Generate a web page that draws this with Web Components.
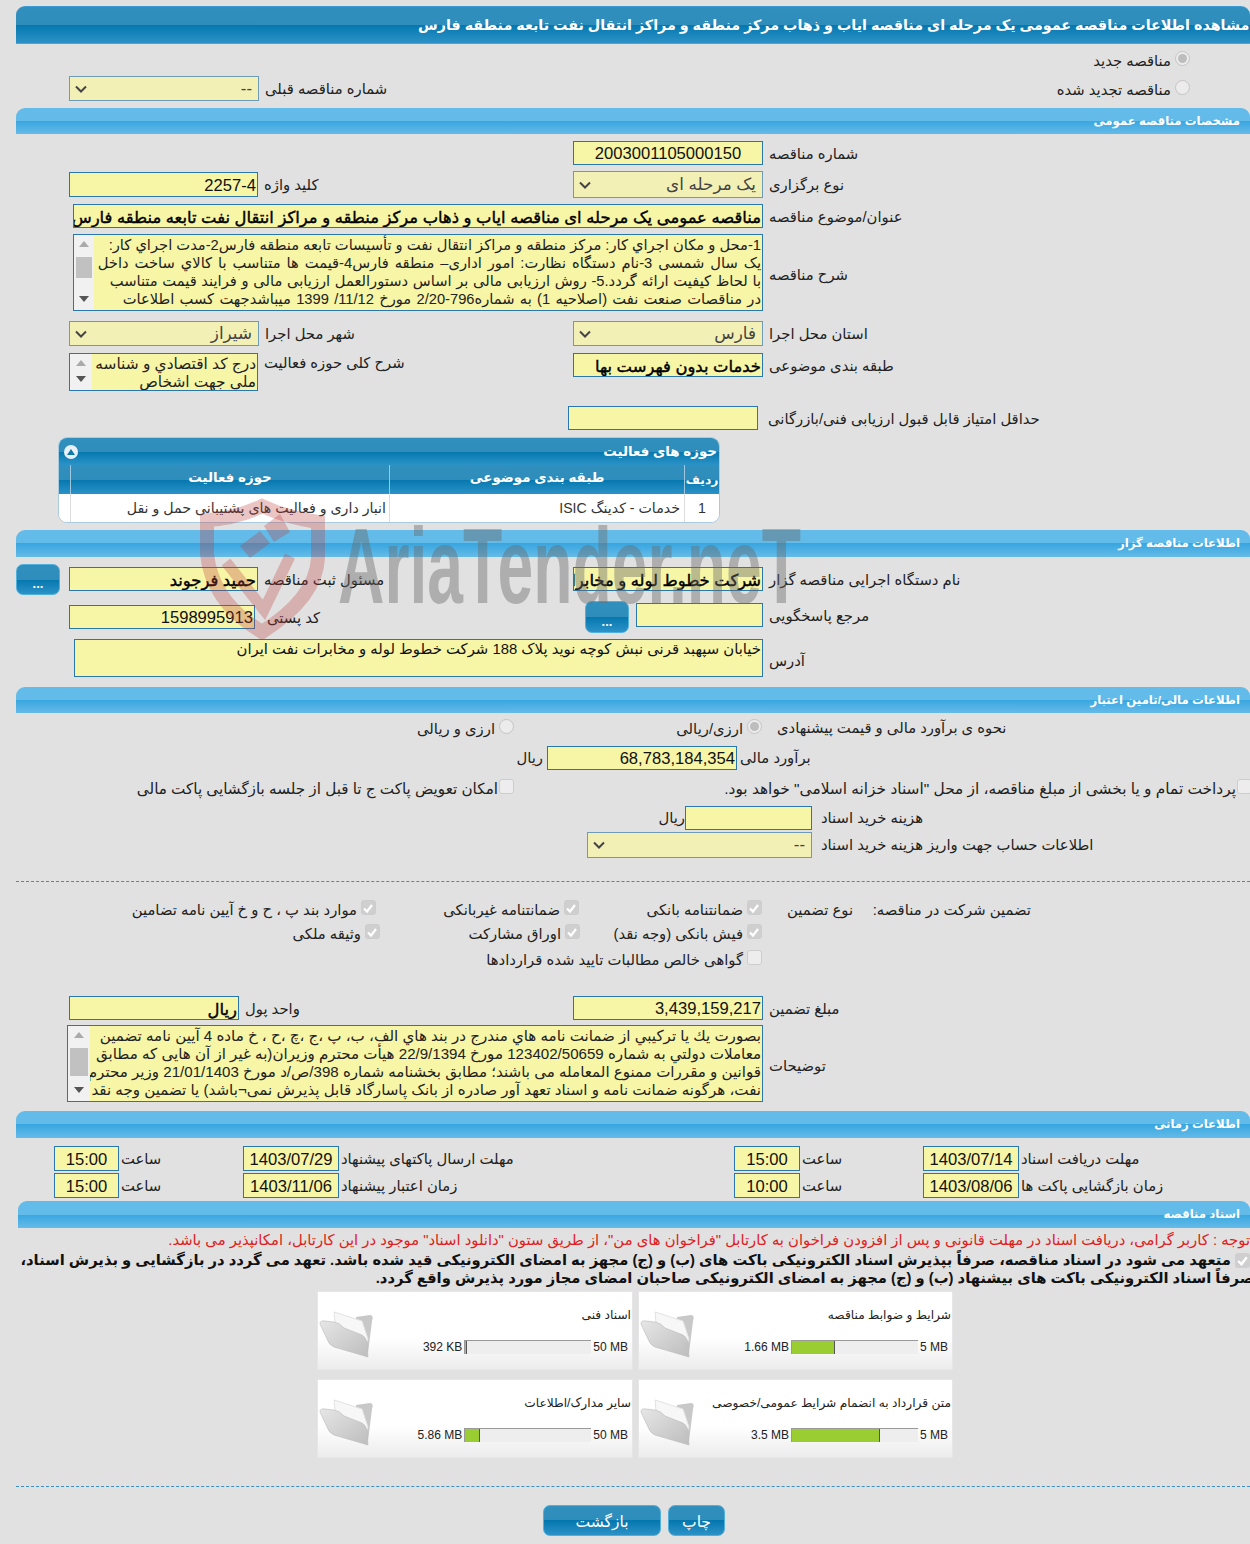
<!DOCTYPE html>
<html lang="fa">
<head>
<meta charset="UTF-8">
<title>مشاهده اطلاعات مناقصه</title>
<style>
html, body { margin: 0; padding: 0; background: #e1e1e1; }
body { font-family: "Liberation Sans", "DejaVu Sans", sans-serif; font-size: 14px; color: #222; }
</style>
</head>
<body>
<tender-page>
  <section-bar kind="title" lead="402">مشاهده اطلاعات مناقصه عمومی یک مرحله ای مناقصه ایاب و ذهاب مرکز منطقه و مراکز انتقال نفت تابعه منطقه فارس</section-bar>

  <form-row cols="504px 1fr" pad="53" style="margin-top:8px;height:50px">
    <select-field label="شماره مناقصه قبلی" style="margin-top:24px;height:25px">--</select-field>
    <div style="display:flex;flex-direction:column;align-items:flex-end;gap:12px;padding-right:60px">
      <tick-item type="radio" checked>مناقصه جدید</tick-item>
      <tick-item type="radio">مناقصه تجدید شده</tick-item>
    </div>
  </form-row>

  <section-bar style="margin-top:6px">مشخصات مناقصه عمومی</section-bar>

  <form-row cols="504px 1fr" pad="53" style="margin-top:7px">
    <span></span>
    <text-field label="شماره مناقصه" align="center">2003001105000150</text-field>
  </form-row>
  <form-row cols="504px 1fr" pad="53" style="margin-top:6px">
    <text-field label="کلید واژه" w="189" h="25" style="margin-top:1px">2257-4</text-field>
    <select-field label="نوع برگزاری" h="27">یک مرحله ای</select-field>
  </form-row>
  <form-row cols="1fr" pad="57" style="margin-top:6px">
    <text-field label="عنوان/موضوع مناقصه" w="690" bold>مناقصه عمومی یک مرحله ای مناقصه ایاب و ذهاب مرکز منطقه و مراکز انتقال نفت تابعه منطقه فارس</text-field>
  </form-row>
  <form-row cols="1fr" pad="57" style="margin-top:6px">
    <memo-field label="شرح مناقصه" w="690" h="77" thumb="22,21" size="14.7">
      <div>1-محل و مکان اجراي کار: مرکز منطقه و مراکز انتقال نفت و تأسیسات تابعه منطقه فارس2-مدت اجراي کار:</div>
      <div style="word-spacing:1.9px">یک سال شمسی 3-نام دستگاه نظارت: امور اداری– منطقه فارس4-قیمت ها متناسب با کالاي ساخت داخل</div>
      <div style="word-spacing:.6px">با لحاظ کیفیت ارائه گردد.5- روش ارزیابی مالی بر اساس دستورالعمل ارزیابی مالی و فرایند قیمت متناسب</div>
      <div style="word-spacing:1.2px">در مناقصات صنعت نفت (اصلاحیه 1) به شماره796-2/20 مورخ 11/12/ 1399 میباشدجهت کسب اطلاعات</div>
    </memo-field>
  </form-row>
  <form-row cols="504px 1fr" pad="53" style="margin-top:10px">
    <select-field label="شهر محل اجرا" h="25">شیراز</select-field>
    <select-field label="استان محل اجرا" h="25">فارس</select-field>
  </form-row>
  <form-row cols="504px 1fr" pad="53" style="margin-top:7px">
    <memo-field label="شرح کلی حوزه فعالیت" w="189" h="38" barw="22" labeltop="1" size="15.4">
      <div>درج کد اقتصادي و شناسه</div>
      <div>ملي جهت اشخاص</div>
    </memo-field>
    <text-field label="طبقه بندی موضوعی" bold style="align-self:start">خدمات بدون فهرست بها</text-field>
  </form-row>
  <form-row cols="499px 1fr" pad="53" style="margin-top:15px">
    <span></span>
    <text-field label="حداقل امتیاز قابل قبول ارزیابی فنی/بازرگانی" gap="10"></text-field>
  </form-row>

  <activity-panel title="حوزه های فعالیت" style="margin:7px 0 0 42px"></activity-panel>

  <section-bar style="margin-top:7px;height:27px">اطلاعات مناقصه گزار</section-bar>

  <form-row cols="53px 504px 1fr" style="margin-top:7px">
    <blue-button w="44" h="31">...</blue-button>
    <text-field label="مسئول ثبت مناقصه" w="189" bold style="margin-top:3px">حمید فرجوند</text-field>
    <text-field label="نام دستگاه اجرایی مناقصه گزار" bold style="margin-top:3px">شرکت خطوط لوله و مخابرات نفت ایران</text-field>
  </form-row>
  <form-row cols="516px 51px 1fr" pad="53" style="margin-top:6px">
    <text-field label="کد پستی" w="186" gap="12" style="margin-top:4px">1598995913</text-field>
    <blue-button w="44" h="32">...</blue-button>
    <text-field label="مرجع پاسخگویی" w="127" style="margin-top:2px"></text-field>
  </form-row>
  <form-row cols="1fr" pad="58" style="margin-top:6px">
    <text-field label="آدرس" w="689" h="38" labelend multiline>خیابان سپهبد قرنی نبش کوچه نوید پلاک 188 شرکت خطوط لوله و مخابرات نفت ایران</text-field>
  </form-row>

  <section-bar style="margin-top:10px">اطلاعات مالی/تامین اعتبار</section-bar>

  <form-row cols="498px 248px 1fr" style="margin-top:7px;height:16px">
    <tick-item type="radio">ارزی و ریالی</tick-item>
    <tick-item type="radio" checked>ارزی/ریالی</tick-item>
    <plain-text style="margin-left:15px">نحوه ی برآورد مالی و قیمت پیشنهادی</plain-text>
  </form-row>
  <form-row cols="527px 197px 1fr" style="margin-top:10px">
    <plain-text style="justify-self:end;align-self:center">ریال</plain-text>
    <text-field w="190" style="margin-left:4px">68,783,184,354</text-field>
    <plain-text style="align-self:center">برآورد مالی</plain-text>
  </form-row>
  <form-row cols="498px 1fr" style="margin-top:11px;height:16px">
    <tick-item type="check" style="gap:1px;font-size:15.2px">امکان تعویض پاکت ج تا قبل از جلسه بازگشایی پاکت مالی</tick-item>
    <tick-item type="check" style="gap:1px;font-size:15.4px;margin-right:-2px">پرداخت تمام و یا بخشی از مبلغ مناقصه، از محل "اسناد خزانه اسلامی" خواهد بود.</tick-item>
  </form-row>
  <form-row cols="669px 127px 1fr" style="margin-top:9px">
    <plain-text style="justify-self:end;align-self:center">ریال</plain-text>
    <text-field w="127"></text-field>
    <plain-text style="margin-left:9px;align-self:center">هزینه خرید اسناد</plain-text>
  </form-row>
  <form-row cols="571px 225px 1fr" style="margin-top:2px">
    <span></span>
    <select-field w="225" h="26">--</select-field>
    <plain-text style="margin-left:9px;align-self:center">اطلاعات حساب جهت واریز هزینه خرید اسناد</plain-text>
  </form-row>

  <dashed-line style="margin-top:23px"></dashed-line>

  <form-row cols="360px 203px 183px 91px 178px" style="margin-top:20px;height:16px">
    <tick-item type="check" checked>موارد بند پ ، ح و خ آیین نامه تضامین</tick-item>
    <tick-item type="check" checked>ضمانتنامه غیربانکی</tick-item>
    <tick-item type="check" checked>ضمانتنامه بانکی</tick-item>
    <plain-text style="justify-self:end">نوع تضمین</plain-text>
    <plain-text style="justify-self:end">تضمین شرکت در مناقصه:</plain-text>
  </form-row>
  <form-row cols="364px 200px 182px" style="margin-top:8px;height:16px">
    <tick-item type="check" checked>وثیقه ملکی</tick-item>
    <tick-item type="check" checked>اوراق مشارکت</tick-item>
    <tick-item type="check" checked>فیش بانکی (وجه نقد)</tick-item>
  </form-row>
  <form-row cols="746px" style="margin-top:10px;height:16px">
    <tick-item type="check">گواهی خالص مطالبات تایید شده قراردادها</tick-item>
  </form-row>

  <form-row cols="504px 1fr" pad="53" style="margin-top:28px">
    <text-field label="واحد پول" w="170" bold>ریال</text-field>
    <text-field label="مبلغ تضمین">3,439,159,217</text-field>
  </form-row>
  <form-row cols="1fr" pad="51" style="margin-top:5px">
    <memo-field label="توضیحات" w="696" h="77" barw="22" thumb="22,28" size="15.1">
      <div>بصورت يك يا تركيبي از ضمانت نامه هاي مندرج در بند هاي الف، ب، پ ،ج ،چ ،ح ، خ ماده 4 آیین نامه تضمین</div>
      <div>معاملات دولتي به شماره 123402/50659 مورخ 22/9/1394 هیأت محترم وزیران(به غیر از آن هایی که مطابق</div>
      <div>قوانین و مقررات ممنوع المعامله می باشند؛ مطابق بخشنامه شماره 398/ص/د مورخ 21/01/1403 وزیر محترم</div>
      <div>نفت، هرگونه ضمانت نامه و اسناد تعهد آور صادره از بانک پاسارگاد قابل پذیرش نمی¬باشد) یا تضمین وجه نقد</div>
    </memo-field>
  </form-row>

  <section-bar style="margin-top:9px;height:27px">اطلاعات زمانی</section-bar>

  <form-row cols="38px 189px 491px 189px 1fr" style="margin-top:8px">
    <span></span>
    <text-field label="ساعت" w="65" h="25" align="center" gap="2">15:00</text-field>
    <text-field label="مهلت ارسال پاکتهای پیشنهاد" w="96" h="25" align="center" gap="2">1403/07/29</text-field>
    <text-field label="ساعت" w="66" h="25" align="center" gap="2">15:00</text-field>
    <text-field label="مهلت دریافت اسناد" w="96" h="25" align="center" gap="2">1403/07/14</text-field>
  </form-row>
  <form-row cols="38px 189px 491px 189px 1fr" style="margin-top:2px">
    <span></span>
    <text-field label="ساعت" w="65" h="25" align="center" gap="2">15:00</text-field>
    <text-field label="زمان اعتبار پیشنهاد" w="96" h="25" align="center" gap="2">1403/11/06</text-field>
    <text-field label="ساعت" w="66" h="25" align="center" gap="2">10:00</text-field>
    <text-field label="زمان بازگشایی پاکت ها" w="96" h="25" align="center" gap="2">1403/08/06</text-field>
  </form-row>

  <section-bar style="margin:3px 0 0 2px;height:27px">اسناد مناقصه</section-bar>

  <docs-notice>
    <span slot="red">توجه : کاربر گرامی، دریافت اسناد در مهلت قانونی و پس از افزودن فراخوان به کارتابل "فراخوان های من"، از طریق ستون "دانلود اسناد" موجود در این کارتابل، امکانپذیر می باشد.</span>
    <span slot="one">متعهد می شود در اسناد مناقصه، صرفاً بپذیرش اسناد الکترونیکی باکت های (ب) و (ج) مجهز به امضای الکترونیکی قید شده باشد. تعهد می گردد در بازگشایی و بذیرش اسناد،</span>
    <span slot="two">صرفاً اسناد الکترونیکی باکت های بیشنهاد (ب) و (ج) مجهز به امضای الکترونیکی صاحبان امضای مجاز مورد پذیرش واقع گردد.</span>
  </docs-notice>

  <div style="display:grid;grid-template-columns:316px 315px;gap:9px 5px;margin:4px 0 0 301px">
    <file-tile used="392 KB" max="50 MB" pct="1">اسناد فنی</file-tile>
    <file-tile used="1.66 MB" max="5 MB" pct="34">شرایط و ضوابط مناقصه</file-tile>
    <file-tile used="5.86 MB" max="50 MB" pct="12">سایر مدارک/اطلاعات</file-tile>
    <file-tile used="3.5 MB" max="5 MB" pct="70">متن قرارداد به انضمام شرایط عمومی/خصوصی</file-tile>
  </div>

  <dashed-line style="margin-top:28px"></dashed-line>

  <div style="display:flex;gap:7px;margin:18px 0 0 527px">
    <blue-button w="118" h="31" big>بازگشت</blue-button>
    <blue-button w="57" h="31" big>چاپ</blue-button>
  </div>
</tender-page>

<script>
const FONT = '"Liberation Sans", "DejaVu Sans", sans-serif';
const LABEL_SIZE = '14.8px';

function boot(el, html) {
    el.attachShadow({ mode: 'open' }).innerHTML = html;
}

class TenderPage extends HTMLElement {
    connectedCallback() {
        boot(this, `<style>
            :host { display: block; position: relative; width: 1250px; height: 1544px; box-sizing: border-box;
                padding: 6px 0 0 16px; overflow: hidden; background: #e1e1e1; color: #222; font-family: ${FONT}; }
            .mark { position: absolute; left: 198px; top: 498px; width: 610px; height: 150px; pointer-events: none; z-index: 5; }
            .mark svg { position: absolute; left: 0; top: 0; }
            .word { position: absolute; left: 140px; top: 14px; font: bold 108px/1 "Liberation Sans", sans-serif; white-space: nowrap;
                color: rgba(105,105,105,.42); transform: scaleX(.595); transform-origin: 0 0; direction: ltr; }
        </style>
        <slot></slot>
        <div class="mark">
            <svg width="135" height="146" viewBox="0 0 135 146">
                <g fill="none" stroke="rgba(190,60,60,.3)">
                    <path stroke-width="14" d="M9 22 Q40 20 64 8 Q90 20 120 24 L120 60 Q118 100 64 134 Q14 104 9 56 Z"/>
                    <path stroke-width="11" d="M28 64 L66 112 L92 58"/>
                </g>
                <g fill="rgba(190,60,60,.3)">
                    <path d="M42 48 L62 33 L72 45 L52 60 Z"/>
                    <path d="M66 28 L82 16 L92 34 L76 44 Z"/>
                </g>
            </svg>
            <div class="word">AriaTender.neT</div>
        </div>`);
    }
}

class SectionBar extends HTMLElement {
    connectedCallback() {
        const lead = this.getAttribute('lead');
        boot(this, `<style>
            :host { display: block; height: 26px; border-radius: 9px 9px 0 0; overflow: hidden; box-sizing: border-box; white-space: nowrap;
                background: linear-gradient(#62bbe9 0, #62bbe9 50%, #38a6e0 50%, #65bbe8 100%); color: #fff; font-weight: bold; font-size: 11.7px; line-height: 26px; text-align: right; padding-right: 10px; direction: rtl; }
            :host([kind=title]) { height: 38px; border: 1px solid #3d9bd3; border-bottom-color: #46a6de; border-width: 1px 0;
                background: linear-gradient(#2f8fbd 0, #2f8dbb 50%, #0477ae 50%, #2c92c7 100%); font-size: 14.3px; line-height: 36px; padding: 0; direction: ltr; text-align: left; }
            .t { direction: rtl; display: inline-block; ${lead ? `margin-left:${lead}px;` : ''} }
        </style><span class="t"><slot></slot></span>`);
    }
}

class FormRow extends HTMLElement {
    connectedCallback() {
        boot(this, `<style>
            :host { display: grid; align-items: start; direction: ltr; }
        </style><slot></slot>`);
        this.style.gridTemplateColumns = this.getAttribute('cols');
        if (this.hasAttribute('pad')) this.style.paddingLeft = this.getAttribute('pad') + 'px';
    }
}

class TextField extends HTMLElement {
    connectedCallback() {
        const w = this.getAttribute('w') || 190;
        const h = Number(this.getAttribute('h') || 24);
        const gap = this.getAttribute('gap') || 6;
        const label = this.getAttribute('label');
        const align = this.getAttribute('align') || 'right';
        const multi = this.hasAttribute('multiline');
        boot(this, `<style>
            :host { display: flex; align-items: ${this.hasAttribute('labelend') ? 'flex-end' : 'center'}; gap: ${gap}px; direction: ltr; }
            .box { box-sizing: border-box; width: ${w}px; height: ${h}px; background: #f7f5a6; border: 1px solid #2a77ad; direction: rtl;
                text-align: ${align}; white-space: nowrap; overflow: hidden; flex: none; font-size: ${multi ? '14.85px' : '16.6px'}; line-height: ${multi ? '18px' : (h - 4) + 'px'}; color: #111;
                padding: ${multi ? 0 : 2}px ${align === 'center' ? 0 : 1}px 0; }
            :host([bold]) .box { font-size: 16.4px; color: #000; -webkit-text-stroke: .4px #000; }
            .l { font-size: ${LABEL_SIZE}; direction: rtl; white-space: nowrap; ${multi ? 'padding-bottom:8px;' : ''} }
        </style><div class="box"><slot></slot></div>${label ? `<span class="l">${label}</span>` : ''}`);
    }
}

class SelectField extends HTMLElement {
    connectedCallback() {
        const w = this.getAttribute('w') || 190;
        const h = this.getAttribute('h') || 25;
        const label = this.getAttribute('label');
        boot(this, `<style>
            :host { display: flex; align-items: center; gap: 6px; direction: ltr; }
            .box { box-sizing: border-box; width: ${w}px; height: ${h}px; background: #f3f0b5; border: 1px solid #6e9ab5; flex: none; display: flex;
                align-items: center; justify-content: space-between; padding: 0 6px 0 5px; color: #444; font-size: 16.8px; }
            .v { direction: rtl; }
            .l { font-size: ${LABEL_SIZE}; direction: rtl; white-space: nowrap; }
        </style><div class="box">
            <svg width="12" height="8" viewBox="0 0 12 8"><path d="M1 1.5 L6 6.5 L11 1.5" fill="none" stroke="#444" stroke-width="2"/></svg>
            <span class="v"><slot></slot></span>
        </div>${label ? `<span class="l">${label}</span>` : ''}`);
    }
}

class MemoField extends HTMLElement {
    connectedCallback() {
        const w = this.getAttribute('w');
        const h = this.getAttribute('h');
        const barw = this.getAttribute('barw') || 20;
        const size = this.getAttribute('size') || 14.7;
        const label = this.getAttribute('label');
        const thumb = (this.getAttribute('thumb') || '').split(',');
        const labeltop = this.getAttribute('labeltop');
        boot(this, `<style>
            :host { display: flex; align-items: ${labeltop ? 'flex-start' : 'center'}; gap: 6px; direction: ltr; }
            .box { box-sizing: border-box; width: ${w}px; height: ${h}px; border: 1px solid #2a77ad; flex: none; display: flex; overflow: hidden; background: #f7f5a6; }
            .bar { position: relative; width: ${barw}px; flex: none; background: #f1f1f1; }
            .bar svg { position: absolute; left: calc(50% - 5px); }
            .thumb { position: absolute; left: 2px; right: 2px; background: #c1c1c1; }
            .txt { flex: 1; min-width: 0; direction: rtl; text-align: right; font-size: ${size}px; line-height: 18px; white-space: nowrap; overflow: hidden; color: #222; padding: 1px 1px 0 0; }
            .l { font-size: ${LABEL_SIZE}; direction: rtl; white-space: nowrap; margin-top: ${labeltop ? labeltop : 3}px; }
        </style><div class="box">
            <div class="bar">
                <svg style="top:6px" width="10" height="6"><path d="M5 0 L10 6 H0 Z" fill="#aaa"/></svg>
                ${thumb[0] ? `<div class="thumb" style="top:${thumb[0]}px;height:${thumb[1]}px"></div>` : ''}
                <svg style="bottom:8px" width="10" height="6"><path d="M0 0 H10 L5 6 Z" fill="#555"/></svg>
            </div>
            <div class="txt"><slot></slot></div>
        </div><span class="l">${label}</span>`);
    }
}

class TickItem extends HTMLElement {
    connectedCallback() {
        const radio = this.getAttribute('type') === 'radio';
        const on = this.hasAttribute('checked');
        let mark;
        if (radio) {
            mark = `<span class="mk r">${on ? '<i></i>' : ''}</span>`;
        } else {
            mark = `<span class="mk c ${on ? 'on' : ''}">${on ? '<svg width="14" height="14" viewBox="0 0 14 14"><path d="M3 7.5 L6 10.5 L11 4" fill="none" stroke="#fff" stroke-width="2.2"/></svg>' : ''}</span>`;
        }
        boot(this, `<style>
            :host { display: flex; gap: 4px; justify-self: end; direction: rtl; align-items: flex-start; white-space: nowrap; font-size: ${LABEL_SIZE}; line-height: 16px; }
            .mk { box-sizing: border-box; width: 15px; height: 15px; flex: none; display: block; }
            .r { margin-top: -1px; border-radius: 50%; border: 1px solid #c4c4c4; background: #ececec; display: flex; align-items: center; justify-content: center; }
            .r i { width: 9px; height: 9px; border-radius: 50%; background: #bdbdbd; }
            .r + .t { margin-top: 1px; }
            .c { margin-top: -2px; border-radius: 3px; border: 1px solid #cdcdcd; background: #ededed; }
            .c.on { background: #cfcfcf; }
            .c svg { display: block; margin: 0; }
        </style>${mark}<span class="t"><slot></slot></span>`);
    }
}

class PlainText extends HTMLElement {
    connectedCallback() {
        boot(this, `<style>
            :host { display: block; justify-self: start; direction: rtl; white-space: nowrap; font-size: ${LABEL_SIZE}; line-height: 16px; }
        </style><slot></slot>`);
    }
}

class ActivityPanel extends HTMLElement {
    connectedCallback() {
        boot(this, `<style>
            :host { display: block; width: 662px; height: 86px; box-sizing: border-box; border: 1px solid #a9cbe0; border-radius: 9px; overflow: hidden; background: #fff; }
            .g { background: linear-gradient(#2f8fbd 0, #2f8dbb 50%, #0477ae 50%, #2c92c7 100%); color: #fff; font-weight: bold; }
            .head { height: 27px; display: flex; align-items: center; justify-content: space-between; padding: 0 2px 0 5px; direction: ltr; font-size: 13.4px; }
            .dot { width: 14px; height: 14px; border-radius: 50%; background: #e8f0f5; display: flex; align-items: center; justify-content: center; }
            .row { display: grid; grid-template-columns: 11px 319px 295px 1fr; direction: ltr; }
            .row > div { border-left: 1px solid #7fb4d2; text-align: center; direction: rtl; white-space: nowrap; }
            .row > div:first-child { border-left: 0; }
            .th > div { height: 29px; line-height: 26px; font-size: 13.4px; border-left-color: #9cc7de; }
            .th .rd { font-size: 12.4px; line-height: 30px; }
            .td > div { height: 28px; line-height: 28px; font-size: 14.2px; color: #333; border-left-color: #dcdcdc; background: #fff; }
            .td .r { text-align: right; padding-right: 3px; }
            .td .x { text-align: right; padding-right: 4px; }
            .head .s { direction: rtl; }
        </style>
        <div class="g head">
            <span class="dot"><svg width="8" height="6"><path d="M4 0 L8 6 H0 Z" fill="#0f78ad"/></svg></span>
            <span class="s">${this.getAttribute('title')}</span>
        </div>
        <div class="g row th">
            <div></div><div>حوزه فعالیت</div><div>طبقه بندی موضوعی</div><div class="rd">ردیف</div>
        </div>
        <div class="row td">
            <div></div>
            <div class="r">انبار داری و فعالیت های پشتیبانی حمل و نقل</div>
            <div class="x">خدمات - کدینگ ISIC</div>
            <div>1</div>
        </div>`);
        this.removeAttribute('title');
    }
}

class BlueButton extends HTMLElement {
    connectedCallback() {
        const big = this.hasAttribute('big');
        boot(this, `<style>
            :host { display: flex; box-sizing: border-box; width: ${this.getAttribute('w')}px; height: ${this.getAttribute('h')}px; flex: none;
                border: 1px solid #4fb0dd; border-radius: 7px; align-items: center; justify-content: center; color: #fff; direction: rtl;
                background: linear-gradient(#2f8fbd 0, #2f8dbb 50%, #0477ae 50%, #2c92c7 100%); font-size: ${big ? '15.5px' : '13px'}; font-weight: ${big ? 'normal' : 'bold'}; }
            span { ${big ? 'padding-top:2px;' : 'padding-top:8px;'} }
        </style><span><slot></slot></span>`);
    }
}

class DashedLine extends HTMLElement {
    connectedCallback() {
        boot(this, `<style>
            :host { display: block; height: 0; border-top: 1px dashed #3a90c2; }
        </style>`);
    }
}

class DocsNotice extends HTMLElement {
    connectedCallback() {
        boot(this, `<style>
            :host { display: block; width: 1234px; white-space: nowrap; margin-top: 3px; direction: rtl; }
            .red { color: #e02020; font-size: 14.8px; line-height: 18px; height: 20px; }
            .b { font-weight: bold; font-size: 14.75px; line-height: 18px; color: #111; }
            .one { display: flex; align-items: center; gap: 4px; }
            .two { margin-right: -4px; }
            .ck { box-sizing: border-box; width: 15px; height: 15px; border-radius: 3px; background: #cfcfcf; flex: none; }
            .ck svg { display: block; }
        </style>
        <div class="red"><slot name="red"></slot></div>
        <div class="b one">
            <span class="ck"><svg width="15" height="15" viewBox="0 0 14 14"><path d="M3 7.5 L6 10.5 L11 4" fill="none" stroke="#fff" stroke-width="2.2"/></svg></span>
            <span><slot name="one"></slot></span>
        </div>
        <div class="b two"><slot name="two"></slot></div>`);
    }
}

class FileTile extends HTMLElement {
    connectedCallback() {
        const pct = this.getAttribute('pct');
        boot(this, `<style>
            :host { display: flex; height: 79px; box-sizing: border-box; direction: ltr; background: linear-gradient(#fff 0, #fff 60%, #ececec 100%); border: 1px solid #e6e6e6; overflow: hidden; }
            svg.f { flex: none; margin: 17px 0 0 0; }
            .m { flex: 1; min-width: 0; padding: 14px 1px 0 0; }
            .n { direction: rtl; text-align: right; font-size: 12.2px; line-height: 18px; height: 18px; white-space: nowrap; color: #222; }
            .st { display: flex; justify-content: flex-end; align-items: center; gap: 2px; margin-top: 16px; font-size: 12px; padding-right: 3px; }
            .bar { box-sizing: border-box; width: 127px; height: 14px; background: #eee; border-top: 1px solid #999; border-left: 1px solid #999; }
            .fill { box-sizing: border-box; height: 100%; width: ${pct}%; background: #9acd32; border-right: 1px solid #555; }
            .v { white-space: nowrap; }
        </style>
        <svg class="f" width="58" height="50" viewBox="0 0 58 50">
            <defs>
                <linearGradient id="g" x1="0" y1="0" x2="1" y2="1"><stop offset="0" stop-color="#e6e6e6"/><stop offset="1" stop-color="#bdbdbd"/></linearGradient>
                <filter id="b"><feGaussianBlur stdDeviation=".5"/></filter>
            </defs>
            <g filter="url(#b)">
                <path d="M38 8 L52 6 Q56 6 54 12 L50 44 L40 36 Z" fill="#c8c8c8"/>
                <path d="M16 3 L44 12 L50 30 L46 40 L18 24 Z" fill="#f7f7f7" stroke="#e2e2e2"/>
                <path d="M2 15 Q2 11 7 12 L16 13 Q22 14 26 19 L44 26 Q48 28 49 34 L50 48 L16 38 Q11 36 9 30 Z" fill="url(#g)" stroke="#bbb" stroke-width=".6"/>
            </g>
        </svg>
        <div class="m">
            <div class="n"><slot></slot></div>
            <div class="st">
                <span class="v">${this.getAttribute('used')}</span>
                <div class="bar"><div class="fill"></div></div>
                <span class="v">${this.getAttribute('max')}</span>
            </div>
        </div>`);
    }
}

customElements.define('tender-page', TenderPage);
customElements.define('section-bar', SectionBar);
customElements.define('form-row', FormRow);
customElements.define('text-field', TextField);
customElements.define('select-field', SelectField);
customElements.define('memo-field', MemoField);
customElements.define('tick-item', TickItem);
customElements.define('plain-text', PlainText);
customElements.define('activity-panel', ActivityPanel);
customElements.define('blue-button', BlueButton);
customElements.define('dashed-line', DashedLine);
customElements.define('docs-notice', DocsNotice);
customElements.define('file-tile', FileTile);
</script>
</body>
</html>
